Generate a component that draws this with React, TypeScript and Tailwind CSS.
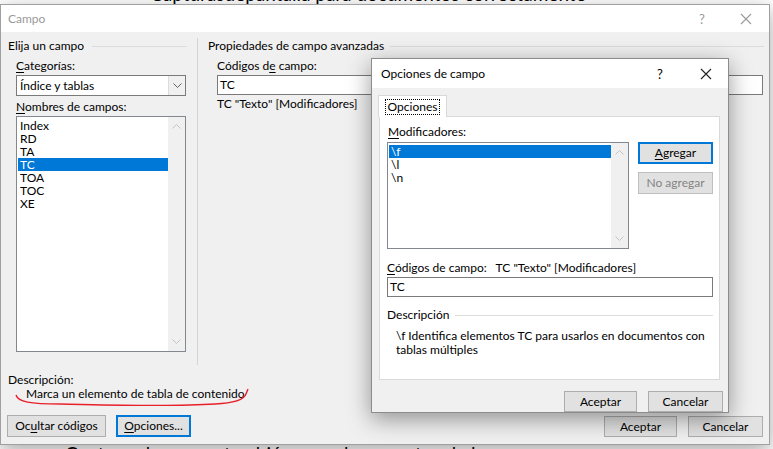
import React from "react";

function ChevUp() {
  return (
    <svg width="9" height="6" viewBox="0 0 9 6">
      <path d="M0.5 5.5 L4.5 1.5 L8.5 5.5" fill="none" stroke="#c4c4c4" strokeWidth="1" />
    </svg>
  );
}
function ChevDown({ color = "#c4c4c4" }: { color?: string }) {
  return (
    <svg width="9" height="6" viewBox="0 0 9 6">
      <path d="M0.5 0.5 L4.5 4.5 L8.5 0.5" fill="none" stroke={color} strokeWidth="1" />
    </svg>
  );
}

function Scrollbar() {
  return (
    <div className="w-[17px] h-full bg-[#f0f0f0] flex flex-col items-center justify-between py-[6px]">
      <ChevUp />
      <ChevDown />
    </div>
  );
}

function Btn({
  children,
  className = "",
  focused = false,
  disabled = false,
}: {
  children: React.ReactNode;
  className?: string;
  focused?: boolean;
  disabled?: boolean;
}) {
  return (
    <div
      className={
        "flex items-center justify-center bg-[#e1e1e1] text-[12px] leading-[16px] " +
        (focused
          ? "border-2 border-[#0078d7] "
          : disabled
          ? "border border-[#bfbfbf] bg-[#e0e0e0] text-[#838383] "
          : "border border-[#adadad] ") +
        className
      }
    >
      {children}
    </div>
  );
}

function CloseX({ color }: { color: string }) {
  return (
    <svg width="12" height="12" viewBox="0 0 12 12">
      <path d="M1 1 L11 11 M11 1 L1 11" stroke={color} strokeWidth="1.1" fill="none" />
    </svg>
  );
}

export default function App() {
  const fields = ["Index", "RD", "TA", "TC", "TOA", "TOC", "XE"];
  return (
    <div className="relative w-[773px] h-[449px] overflow-hidden bg-white font-[Lato,sans-serif] text-black">
      {/* background document text */}
      <div className="absolute left-[150px] top-[-16px] text-[19px] leading-[20px] whitespace-nowrap text-black">
        Capturasdepantalla para documentos correctamente
      </div>
      <div className="absolute left-[65px] top-[444px] text-[19px] leading-[20px] whitespace-nowrap text-black">
        Capturasdecampostambién para documentos     de             las
      </div>

      {/* Main dialog */}
      <div className="absolute left-0 top-[4px] w-[770px] h-[441px] border border-[#a0a0a0] bg-[#f0f0f0] shadow-[0_6px_20px_rgba(0,0,0,0.35)] flex flex-col text-[12px] leading-[16px]">
        <div className="h-[27px] bg-white flex items-center shrink-0">
          <span className="pl-[7px] text-[#9a9a9a]">Campo</span>
          <div className="ml-auto flex">
            <div className="w-[44px] flex justify-center text-[#9a9a9a] text-[13px]">?</div>
            <div className="w-[44px] flex justify-center items-center mr-[1px]">
              <CloseX color="#9a9a9a" />
            </div>
          </div>
        </div>

        <div className="flex h-[333px] shrink-0">
          {/* left column */}
          <div className="w-[196px] flex flex-col pt-[6px]">
            <div className="flex items-center pl-[7px] h-[16px]">
              <span>Elija un campo</span>
              <div className="flex-1 h-px bg-[#dcdcdc] ml-[8px] mr-[10px]" />
            </div>
            <div className="pl-[15px] mt-[4px] h-[16px]">
              <span className="underline underline-offset-2">C</span>ategorías:
            </div>
            <div className="ml-[15px] mt-[1px] w-[170px] h-[21px] border border-[#7a7a7a] bg-white flex">
              <div className="flex-1 pl-[3px] flex items-center">Índice y tablas</div>
              <div className="w-[17px] bg-[#f0f0f0] border-l border-[#dcdcdc] flex items-center justify-center">
                <ChevDown color="#606060" />
              </div>
            </div>
            <div className="pl-[15px] mt-[3px] h-[16px]">
              <span className="underline underline-offset-2">N</span>ombres de campos:
            </div>
            <div className="ml-[15px] mt-[1px] w-[170px] h-[236px] border border-[#828790] bg-white flex">
              <div className="flex-1 pt-[2px] pl-[1px]">
                {fields.map((f) => (
                  <div
                    key={f}
                    className={
                      "h-[13px] leading-[13px] pl-[2px] " +
                      (f === "TC" ? "bg-[#0078d7] text-white" : "")
                    }
                  >
                    {f}
                  </div>
                ))}
              </div>
              <Scrollbar />
            </div>
          </div>
          <div className="w-px bg-[#d4d4d4] mt-[6px] h-[327px]" />
          {/* right column */}
          <div className="flex-1 flex flex-col pt-[6px] pl-[10px]">
            <div className="flex items-center h-[16px]">
              <span>Propiedades de campo avanzadas</span>
              <div className="flex-1 h-px bg-[#dcdcdc] ml-[6px] mr-[5px]" />
            </div>
            <div className="pl-[9px] mt-[4px] h-[16px]">
              Códigos d<span className="underline underline-offset-2">e</span> campo:
            </div>
            <div className="ml-[9px] mt-[1px] w-[546px] h-[20px] border border-[#7a7a7a] bg-white pl-[2px] flex items-center">
              TC
            </div>
            <div className="pl-[9px] mt-[1px] h-[16px]">TC "Texto" [Modificadores]</div>
          </div>
        </div>

        {/* bottom description */}
        <div className="pl-[7px] mt-[8px] h-[14px] leading-[14px]">Descripción:</div>
        <div className="relative pl-[25px] h-[14px] leading-[14px]">Marca un elemento de tabla de contenido</div>

        <div className="flex mt-[14px] items-start">
          <Btn className="ml-[6px] w-[99px] h-[22px]">
            Oc<span className="underline underline-offset-2">u</span>ltar códigos
          </Btn>
          <Btn focused className="ml-[10px] w-[75px] h-[22px]">
            <span className="underline underline-offset-2">O</span>pciones...
          </Btn>
          <Btn className="ml-auto mt-[1px] w-[73px] h-[21px]">Aceptar</Btn>
          <Btn className="ml-[11px] mr-[6px] mt-[1px] w-[75px] h-[21px]">Cancelar</Btn>
        </div>
      </div>

      {/* red hand-drawn underline */}
      <svg className="absolute left-0 top-0" width="773" height="449" viewBox="0 0 773 449" fill="none">
        <path
          d="M16 395 C18 402, 30 404, 60 404 C110 405, 170 407, 215 404 C235 403, 244 400, 246 394 L248 389"
          stroke="#e8202a"
          strokeWidth="1.4"
          fill="none"
        />
      </svg>

      {/* Opciones de campo dialog */}
      <div className="absolute left-[371px] top-[58px] w-[358px] h-[355px] border border-[#8c8c8c] bg-[#f0f0f0] shadow-[0_6px_22px_rgba(0,0,0,0.4)] flex flex-col text-[12px] leading-[16px]">
        <div className="h-[29px] bg-white flex items-center shrink-0">
          <span className="pl-[9px]">Opciones de campo</span>
          <div className="ml-auto flex">
            <div className="w-[44px] flex justify-center text-[13px] mr-[2px]">?</div>
            <div className="w-[44px] flex justify-center items-center">
              <CloseX color="#222" />
            </div>
          </div>
        </div>
        <div className="flex flex-col">
          {/* tab */}
          <div className="relative z-10 ml-[6px] mt-[7px] -mb-px w-[69px] h-[22px] bg-white border border-b-0 border-[#d9d9d9] flex items-center justify-center">
            <div className="border border-dotted border-black px-[2px] h-[16px] leading-[14px]">Opciones</div>
          </div>
          {/* panel */}
          <div className="ml-[7px] w-[341px] h-[264px] bg-white border border-[#d9d9d9] flex flex-col">
            <div className="pl-[8px] pt-[7px] h-[23px]">
              <span className="underline underline-offset-2">M</span>odificadores:
            </div>
            <div className="flex mt-[2px] ml-[7px]">
              <div className="w-[242px] h-[107px] border border-[#828790] bg-white flex">
                <div className="flex-1 pt-[2px] pl-[1px]">
                  {["\\f", "\\l", "\\n"].map((m, i) => (
                    <div
                      key={m}
                      className={
                        "h-[13px] leading-[13px] pl-[2px] " + (i === 0 ? "bg-[#0078d7] text-white" : "")
                      }
                    >
                      {m}
                    </div>
                  ))}
                </div>
                <Scrollbar />
              </div>
              <div className="flex flex-col ml-[9px]">
                <Btn focused className="w-[75px] h-[22px]">
                  <span className="underline underline-offset-2">A</span>gregar
                </Btn>
                <Btn disabled className="w-[75px] h-[22px] mt-[8px]">
                  No agregar
                </Btn>
              </div>
            </div>
            <div className="pl-[7px] mt-[11px] h-[16px] whitespace-pre">
              <span className="underline underline-offset-2">C</span>ódigos de campo:   TC "Texto" [Modificadores]
            </div>
            <div className="ml-[7px] mt-[1px] w-[326px] h-[20px] border border-[#7a7a7a] bg-white pl-[2px] flex items-center">
              TC
            </div>
            <div className="flex items-center pl-[7px] mt-[10px] h-[16px]">
              <span>Descripción</span>
              <div className="flex-1 h-px bg-[#dcdcdc] ml-[6px] mr-[6px]" />
            </div>
            <div className="pl-[16px] mt-[6px] leading-[14px]">
              \f Identifica elementos TC para usarlos en documentos con
              <br />
              tablas múltiples
            </div>
          </div>
          <div className="flex justify-end mt-[11px] mr-[5px]">
            <Btn className="w-[73px] h-[21px]">Aceptar</Btn>
            <Btn className="ml-[11px] w-[75px] h-[21px]">Cancelar</Btn>
          </div>
        </div>
      </div>
    </div>
  );
}
